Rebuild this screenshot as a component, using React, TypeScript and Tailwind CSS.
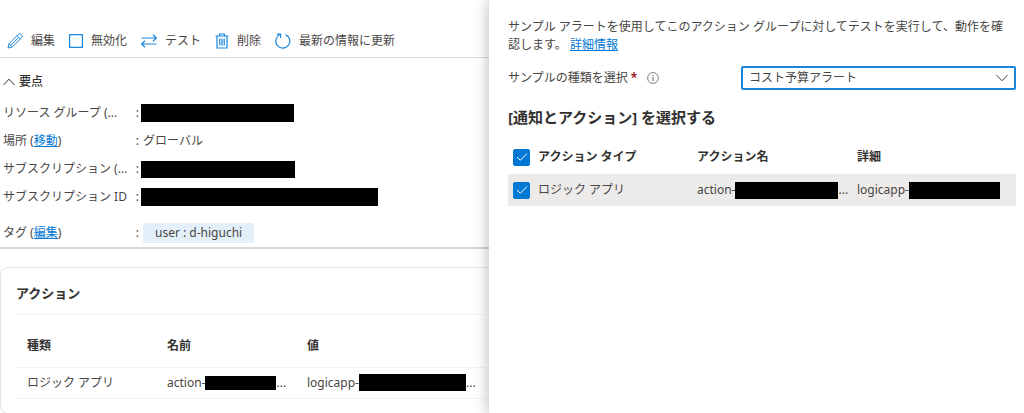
import { useState } from "react";
import type { ReactNode } from "react";

const iconProps = { fill: "none", stroke: "currentColor", "aria-hidden": true } as const;

function EditIcon() {
  return <svg {...iconProps} viewBox="0 0 16 16" className="size-4"><path d="M1 15l1-4.3L11.2 1.5a1.9 1.9 0 0 1 2.8 0l.5.5a1.9 1.9 0 0 1 0 2.8L5.3 14 1 15zM10 2.7L13.3 6M2 10.7L5.3 14M11.7 4.4l-7.9 7.9"/></svg>;
}

function DisableIcon() {
  return <svg {...iconProps} viewBox="0 0 14 14" className="size-3.5"><path d="M.6.6h12.8v12.8H.6z" strokeWidth="1.2"/></svg>;
}

function TestIcon() {
  return <svg {...iconProps} viewBox="0 0 16 16" className="size-4"><path d="M.5 5h15M12 1.8L15.3 5 12 8.2M15.5 11H.5M4 7.8L.7 11 4 14.2" strokeWidth="1.2"/></svg>;
}

function DeleteIcon() {
  return <svg {...iconProps} viewBox="0 0 14 16" className="h-4 w-3.5"><path d="M.5 3h13M4.5 3V1h5v2M2 3v12h10V3M4.8 5.5v7M7 5.5v7M9.2 5.5v7" strokeWidth="1.2"/></svg>;
}

function RefreshIcon() {
  return <svg {...iconProps} viewBox="0 0 16 16" className="size-4"><path d="M10.5 1.6a7 7 0 1 1-5.8.2M1.8 1.2h3.8V5" strokeWidth="1.2"/></svg>;
}

function Chevron({ up = false }: { up?: boolean }) {
  return <svg {...iconProps} viewBox="0 0 12 8" className={up ? "h-2 w-3 rotate-180" : "h-2 w-3"}><path d="M.5 1L6 6.8 11.5 1"/></svg>;
}

function InfoIcon() {
  return <svg {...iconProps} viewBox="0 0 12 12" className="size-3 text-[#605e5c]"><circle cx="6" cy="6" r="5.4" strokeWidth=".8"/><path d="M6 5v4M6 3v1"/></svg>;
}

function Command({ label, children }: { label: string; children: ReactNode }) {
  return <button type="button" className="flex items-center gap-2 whitespace-nowrap"><span className="text-[#1b87dc]">{children}</span>{label}</button>;
}

function TextLink({ children }: { children: ReactNode }) {
  return <a href="#" className="text-[#0078d4] underline">{children}</a>;
}

function Redacted({ className }: { className: string }) {
  return <span className={`shrink-0 bg-black ${className}`} />;
}

function Property({ label, className = "h-7", children }: { label: ReactNode; className?: string; children: ReactNode }) {
  return <div className={`flex items-center ${className}`}>
    <dt className="flex w-[136px] shrink-0 justify-between whitespace-nowrap"><span>{label}</span><span>:</span></dt>
    <dd className="flex items-center pl-0.5">{children}</dd>
  </div>;
}

function Checkbox({ label, checked, onChange }: { label: string; checked: boolean; onChange: (value: boolean) => void }) {
  return <span className="grid size-[17px] place-items-center">
    <input type="checkbox" aria-label={label} checked={checked} onChange={(e) => onChange(e.target.checked)} className="col-start-1 row-start-1 size-[17px] appearance-none rounded-xs border border-[#605e5c] checked:border-[#0078d4] checked:bg-[#0078d4]" />
    <svg {...iconProps} viewBox="0 0 12 10" className="pointer-events-none col-start-1 row-start-1 h-2.5 w-3 text-white"><path d="M1 5l3.3 3.3L11 1.5"/></svg>
  </span>;
}

function Overview() {
  return <main className="min-w-0 flex-1 overflow-hidden">
    <div className="flex h-[58px] items-end border-b border-[#dcdcdc] pb-[7px] pl-[7px]">
      <div className="flex gap-[14px]">
        <Command label="編集"><EditIcon /></Command>
        <Command label="無効化"><DisableIcon /></Command>
        <Command label="テスト"><TestIcon /></Command>
        <Command label="削除"><DeleteIcon /></Command>
        <Command label="最新の情報に更新"><RefreshIcon /></Command>
      </div>
    </div>

    <section className="border-b-2 border-[#d8d8d8] pt-[15px]">
      <button type="button" className="flex items-center gap-1 pl-[3px] font-medium text-[#323130]"><Chevron up />要点</button>
      <dl className="mt-2 pl-[3px]">
        <Property label="リソース グループ (..."><Redacted className="h-[18px] w-[153px]" /></Property>
        <Property label={<>場所 (<TextLink>移動</TextLink>)</>}><span className="pl-0.5">グローバル</span></Property>
        <Property label="サブスクリプション (..."><Redacted className="h-[17px] w-[154px]" /></Property>
        <Property label="サブスクリプション ID"><Redacted className="h-[18px] w-[237px]" /></Property>
        <Property label={<>タグ (<TextLink>編集</TextLink>)</>} className="mt-2 h-7"><span className="ml-0.5 rounded-xs bg-[#e3f0fa] px-3 py-px">user : d-higuchi</span></Property>
      </dl>
    </section>

    <section className="mt-[18px] rounded-l-lg border-y border-l border-[#e6e6e6] pr-1 pb-[14px] pl-[15px]">
      <h2 className="border-b border-[#f3f2f1] pt-4 pb-3 text-[13px] font-bold text-[#323130]">アクション</h2>
      <table className="w-full table-fixed text-left whitespace-nowrap">
        <colgroup><col className="w-[151px]" /><col className="w-[140px]" /><col /></colgroup>
        <thead>
          <tr className="h-[52px] border-b border-[#f3f2f1] text-[#323130]">
            <th className="pt-2.5 pl-[11px]">種類</th><th className="pt-2.5">名前</th><th className="pt-2.5">値</th>
          </tr>
        </thead>
        <tbody>
          <tr className="h-[31px] border-b border-[#f3f2f1]">
            <td className="pl-[11px]">ロジック アプリ</td>
            <td><div className="flex items-center">action-<Redacted className="h-[14px] w-[71px]" />...</div></td>
            <td><div className="flex items-center">logicapp-<Redacted className="h-[17px] w-[107px]" />...</div></td>
          </tr>
        </tbody>
      </table>
    </section>
  </main>;
}

function TestPane() {
  const [all, setAll] = useState(true);
  const [row, setRow] = useState(true);

  return <aside className="w-[535px] shrink-0 bg-white pt-[18px] pr-2 pl-[19px] shadow-[0_0_14px_rgba(0,0,0,0.3)]">
    <p className="pr-2">サンプル アラートを使用してこのアクション グループに対してテストを実行して、動作を確認します。 <TextLink>詳細情報</TextLink></p>

    <div className="mt-3 flex items-center">
      <label htmlFor="sample-type" className="whitespace-nowrap">サンプルの種類を選択 <span className="font-bold text-[#a4262c]">*</span></label>
      <span className="ml-2.5"><InfoIcon /></span>
      <div className="ml-auto grid w-[275px] items-center">
        <select id="sample-type" className="col-start-1 row-start-1 h-6 w-full appearance-none rounded-xs border-2 border-[#1b87dc] bg-white px-1.5">
          <option>コスト予算アラート</option>
        </select>
        <span className="pointer-events-none col-start-1 row-start-1 mr-2 justify-self-end"><Chevron /></span>
      </div>
    </div>

    <h2 className="mt-[17px] text-[15px] leading-5 font-bold text-[#323130]">[通知とアクション] を選択する</h2>
    <table className="mt-[13px] w-full table-fixed text-left whitespace-nowrap">
      <colgroup><col className="w-[30px]" /><col className="w-[159px]" /><col className="w-[160px]" /><col /></colgroup>
      <thead>
        <tr className="h-[34px] text-[#323130]">
          <th className="pl-[5px]"><Checkbox label="すべて選択" checked={all} onChange={(value) => { setAll(value); setRow(value); }} /></th>
          <th>アクション タイプ</th><th>アクション名</th><th>詳細</th>
        </tr>
      </thead>
      <tbody>
        <tr className="h-8 bg-[#edebe9]">
          <td className="pl-[5px]"><Checkbox label="ロジック アプリ" checked={row} onChange={(value) => { setRow(value); setAll(value); }} /></td>
          <td>ロジック アプリ</td>
          <td><div className="flex items-center">action-<Redacted className="h-[17px] w-[103px]" />...</div></td>
          <td><div className="flex items-center">logicapp-<Redacted className="h-[17px] w-[91px]" /></div></td>
        </tr>
      </tbody>
    </table>
  </aside>;
}

export default function App() {
  return <div className="flex min-h-screen bg-white font-['Noto_Sans','Noto_Sans_CJK_JP',sans-serif] text-xs leading-[18px] text-[#484644]" lang="ja">
    <Overview />
    <TestPane />
  </div>;
}
